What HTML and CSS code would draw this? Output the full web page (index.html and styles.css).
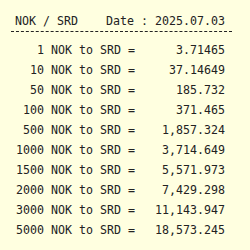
FILE: index.html
```html
<!DOCTYPE html>
<html>
<head>
<meta charset="utf-8">
<link rel="stylesheet" href="styles.css">
</head>
<body>
<div class="box">
  <div class="head"><span class="pair">NOK / SRD</span><span class="date">Date : 2025.07.03</span></div>
  <div class="rows">
    <div class="row"><span class="l">1 NOK to SRD =</span><span class="v">3.71465</span></div>
    <div class="row"><span class="l">10 NOK to SRD =</span><span class="v">37.14649</span></div>
    <div class="row"><span class="l">50 NOK to SRD =</span><span class="v">185.732</span></div>
    <div class="row"><span class="l">100 NOK to SRD =</span><span class="v">371.465</span></div>
    <div class="row"><span class="l">500 NOK to SRD =</span><span class="v">1,857.324</span></div>
    <div class="row"><span class="l">1000 NOK to SRD =</span><span class="v">3,714.649</span></div>
    <div class="row"><span class="l">1500 NOK to SRD =</span><span class="v">5,571.973</span></div>
    <div class="row"><span class="l">2000 NOK to SRD =</span><span class="v">7,429.298</span></div>
    <div class="row"><span class="l">3000 NOK to SRD =</span><span class="v">11,143.947</span></div>
    <div class="row"><span class="l">5000 NOK to SRD =</span><span class="v">18,573.245</span></div>
  </div>
</div>
</body>
</html>
```
FILE: styles.css
```css
html, body {
  margin: 0;
  padding: 0;
  background: #ffffe0;
}
.box {
  width: 250px;
  height: 250px;
  padding: 13px 0 0 11px;
  box-sizing: border-box;
  font-family: "DejaVu Sans Mono", monospace;
  font-size: 11.63px;
  color: #222;
}
.head {
  width: 221px;
  height: 19px;
  border-bottom: 1px dashed #222;
  display: flex;
  padding-left: 4px;
  box-sizing: border-box;
  line-height: 16px;
}
.pair {
  width: 91px;
}
.rows {
  padding-top: 8px;
  padding-left: 1px;
}
.row {
  display: flex;
  height: 20px;
  line-height: 20px;
}
.l {
  width: 123px;
  text-align: right;
}
.v {
  width: 90px;
  text-align: right;
}
```
